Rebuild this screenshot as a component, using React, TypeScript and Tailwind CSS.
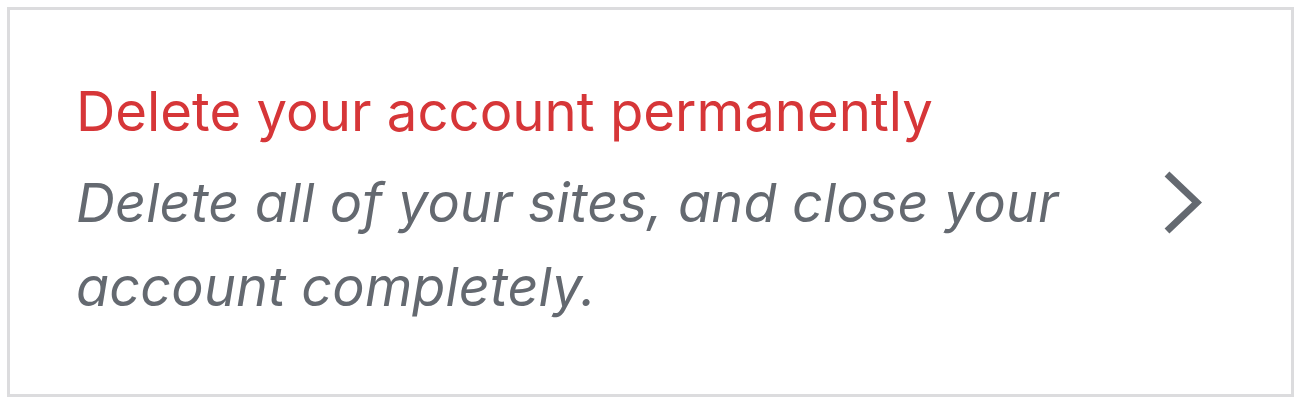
export default function App() {
  return (
    <div className="w-[1298px] h-[400px] bg-white pt-[7px] pl-[7px]" style={{ fontFamily: 'Inter, "Noto Sans", sans-serif' }}>
      <div className="w-[1287px] h-[390px] border-[3px] border-[#dcdcde] bg-white flex items-start pt-[69px] pl-[66px] pr-[89px]">
        <div className="flex-1 flex flex-col">
          <div className="text-[54.5px] leading-[64px] text-[#d63638]">Delete your account permanently</div>
          <div className="mt-[18px] text-[54px] leading-[84px] italic tracking-[0.15px] text-[#646970] max-w-[1020px]">
            Delete all of your sites, and close your account completely.
          </div>
        </div>
        <svg width="38" height="63" viewBox="0 0 38 63" fill="none" className="shrink-0 self-center -mt-[69px]">
          <polyline points="3,3 33,31.5 3,60" stroke="#646970" strokeWidth="7" strokeLinejoin="miter" />
        </svg>
      </div>
    </div>
  );
}
